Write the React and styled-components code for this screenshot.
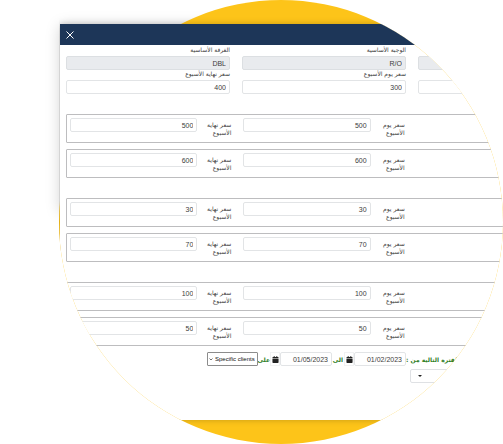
import { useState } from 'react';
import styled, { createGlobalStyle } from 'styled-components';
import { FaCalendar } from 'react-icons/fa';

const GlobalStyle = createGlobalStyle`
  * {
    box-sizing: border-box;
  }

  body {
    margin: 0;
    background-color: #ffffff;
    color: #3c3c3c;
    font-family: "Liberation Sans", "DejaVu Sans", sans-serif;
    overflow: hidden;
  }

  input, select, button {
    font-family: inherit;
    color: inherit;
    margin: 0;
  }
`;

const Hero = styled.main`
  padding-left: 59px;
`;

const Disc = styled.div`
  position: relative;
  width: 100%;
  aspect-ratio: 1;

  &::before {
    content: '';
    position: absolute;
    inset: 0;
    border-radius: 50%;
    background-color: #fdc419;
  }

  &::after {
    content: '';
    position: absolute;
    z-index: -1;
    top: 26px;
    left: 1px;
    width: 40%;
    height: 42%;
    box-shadow: 0 0 14px rgba(0, 0, 0, 0.18);
  }
`;

const Clip = styled.div`
  position: relative;
  height: 100%;
  padding: 24px 0 24px 1px;
  overflow: hidden;
  border-radius: 0 50% 50% 50%;
`;

const Panel = styled.section`
  width: calc(100% + 85px);
  height: 100%;
  background-color: #ffffff;
  box-shadow: 0 0 6px rgba(0, 0, 0, 0.22);
`;

const Header = styled.header`
  display: flex;
  align-items: center;
  height: 21px;
  padding: 0 6px;
  background-color: #1d3658;
`;

const CloseButton = styled.button`
  display: flex;
  padding: 0;
  border: none;
  background: none;
  color: #ffffff;
  cursor: pointer;
`;

const Form = styled.form`
  padding: 1px 6px 0;
`;

const BaseGrid = styled.div`
  display: grid;
  grid-template-columns: repeat(3, 1fr);
  column-gap: 12px;
  margin-bottom: 20px;
`;

const Field = styled.label`
  display: block;
  direction: rtl;
`;

const LabelText = styled.span`
  display: block;
  height: 10px;
  font-family: "DejaVu Sans", sans-serif;
  font-size: 6px;
  line-height: 8px;
  white-space: nowrap;
`;

const TextInput = styled.input`
  display: block;
  width: 100%;
  min-width: 0;
  height: 14px;
  padding: 0 3px;
  border: 1px solid #e2e4e6;
  border-radius: 2px;
  background-color: #ffffff;
  font-size: 7px;
  text-align: right;
  direction: ltr;

  &:disabled {
    background-color: #e9ebee;
    border-color: #dcdfe2;
    color: #3c3c3c;
  }
`;

const PriceGroups = styled.div`
  display: flex;
  flex-direction: column;
  gap: 20px;
  margin-bottom: 6px;
`;

const PriceGroup = styled.div`
  display: flex;
  flex-direction: column;
  gap: 6px;
`;

const PriceRow = styled.div`
  display: grid;
  grid-template-columns: repeat(3, 1fr);
  column-gap: 12px;
  height: 29px;
  padding: 3px;
  border: 1px solid #bdbdbf;
  border-radius: 1px;
`;

const PriceField = styled.label`
  display: flex;
  direction: rtl;
`;

const PriceLabel = styled.span`
  flex: 0 0 34px;
  padding-top: 3px;
  font-family: "DejaVu Sans", sans-serif;
  font-size: 6px;
  line-height: 8px;
`;

const PeriodRow = styled.div`
  display: flex;
  align-items: center;
  direction: rtl;
  height: 14px;
  margin-bottom: 3px;
`;

const PeriodText = styled.label`
  flex: ${({ $lead }) => ($lead ? '0 0 176px' : '0 0 12px')};
  min-width: 0;
  color: #2e7d1e;
  font-family: "DejaVu Sans", sans-serif;
  font-size: 6px;
  font-weight: 700;
  text-align: ${({ $lead }) => ($lead ? 'left' : 'center')};
  white-space: nowrap;
`;

const DateBox = styled.div`
  display: flex;
  flex: 0 0 62px;
`;

const DateButton = styled.button`
  display: flex;
  flex: 0 0 10px;
  align-items: center;
  justify-content: center;
  padding: 0;
  border: 1px solid #f1f2f3;
  background-color: #ffffff;
  color: #222222;
  cursor: pointer;
`;

const ClientSelect = styled.select`
  flex: 0 0 51px;
  height: 14px;
  padding: 0 2px 0 7px;
  border: 1px solid #8c8c8c;
  border-radius: 1px;
  appearance: none;
  background: url("data:image/svg+xml,%3Csvg xmlns='http://www.w3.org/2000/svg' viewBox='0 0 4 3'%3E%3Cpath d='M.5 .5 2 2 3.5 .5' fill='none' stroke='%23333' stroke-width='.7'/%3E%3C/svg%3E") no-repeat 1px center / 4px 3px;
  color: #111111;
  font-size: 6px;
  direction: ltr;
`;

const RoomSelect = styled.select`
  display: block;
  width: 172px;
  height: 14px;
  margin-left: auto;
  border: 1px solid #dfe1e4;
  border-radius: 2px;
  appearance: none;
  background: url("data:image/svg+xml,%3Csvg xmlns='http://www.w3.org/2000/svg' viewBox='0 0 4 2'%3E%3Cpath d='M0 0h4L2 2z' fill='%23222'/%3E%3C/svg%3E") no-repeat 7px center / 4px 2px;
  font-size: 7px;
`;

const baseFields = [
  { label: 'الغرفة الأساسية', value: 'DBL', disabled: true },
  { label: 'الوجبة الأساسية', value: 'R/O', disabled: true },
  { label: '', value: '', disabled: true },
  { label: 'سعر نهاية الأسبوع', value: '400' },
  { label: 'سعر يوم الأسبوع', value: '300' },
  { label: '', value: '' },
];

const priceGroups = [[500, 600], [30, 70], [100, 50]];

const PriceInput = ({ label, value }) => (
  <PriceField>
    <PriceLabel>{label}</PriceLabel>
    <TextInput defaultValue={value} />
  </PriceField>
);

const DateInput = ({ id, value }) => (
  <DateBox>
    <TextInput id={id} defaultValue={value} />
    <DateButton type="button" aria-label="calendar">
      <FaCalendar size={7} />
    </DateButton>
  </DateBox>
);

const App = () => {
  const [clients, setClients] = useState('specific');

  return (
    <Hero>
      <GlobalStyle />
      <Disc>
        <Clip>
          <Panel>
            <Header>
              <CloseButton type="button" aria-label="close">
                <svg width="8" height="8" viewBox="0 0 8 8" fill="none" stroke="currentColor">
                  <path d="M.5 .5 7.5 7.5M7.5 .5 .5 7.5" />
                </svg>
              </CloseButton>
            </Header>
            <Form>
              <BaseGrid>
                {baseFields.map((field, index) => (
                  <Field key={index}>
                    <LabelText>{field.label}</LabelText>
                    <TextInput defaultValue={field.value} disabled={field.disabled} />
                  </Field>
                ))}
              </BaseGrid>
              <PriceGroups>
                {priceGroups.map((prices) => (
                  <PriceGroup key={prices[0]}>
                    {prices.map((price) => (
                      <PriceRow key={price}>
                        <PriceInput label="سعر نهاية الأسبوع" value={price} />
                        <PriceInput label="سعر يوم الأسبوع" value={price} />
                      </PriceRow>
                    ))}
                  </PriceGroup>
                ))}
              </PriceGroups>
              <PeriodRow>
                <PeriodText $lead htmlFor="from">الفترة التالية من :</PeriodText>
                <DateInput id="from" value="01/02/2023" />
                <PeriodText htmlFor="to">الى</PeriodText>
                <DateInput id="to" value="01/05/2023" />
                <PeriodText htmlFor="clients">على</PeriodText>
                <ClientSelect id="clients" value={clients} onChange={(e) => setClients(e.target.value)}>
                  <option value="specific">Specific clients</option>
                  <option value="all">All clients</option>
                </ClientSelect>
              </PeriodRow>
              <RoomSelect aria-label="clients list" />
            </Form>
          </Panel>
        </Clip>
      </Disc>
    </Hero>
  );
};

export default App;
